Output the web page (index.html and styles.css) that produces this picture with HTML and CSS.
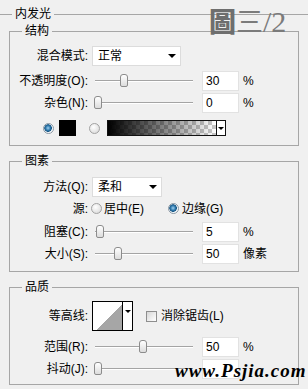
FILE: index.html
```html
<!DOCTYPE html>
<html lang="zh-CN">
<head>
  <meta charset="UTF-8">
  <meta name="viewport" content="width=device-width, initial-scale=1.0">
  <title>内发光</title>
  <link rel="stylesheet" href="styles.css">
</head>
<body>
  <fieldset class="panel">
    <legend>内发光</legend>

    <!-- 结构 -->
    <fieldset class="group group-structure">
      <legend>结构</legend>
      <div class="row">
        <span class="label">混合模式:</span>
        <div class="select select-mode"><span>正常</span><i class="arrow"></i></div>
      </div>
      <div class="row row-opacity">
        <span class="label">不透明度(O):</span>
        <div class="slider"><span class="thumb" style="left: 25px"></span></div>
        <div class="num">30</div>
        <span class="unit">%</span>
      </div>
      <div class="row">
        <span class="label">杂色(N):</span>
        <div class="slider"><span class="thumb" style="left: -1px"></span></div>
        <div class="num">0</div>
        <span class="unit">%</span>
      </div>
      <div class="row row-colors">
        <span class="radio on"></span>
        <span class="swatch"></span>
        <span class="radio radio-gradient"></span>
        <div class="gradient"><span class="gradient-fill"></span><span class="gradient-drop"><i class="arrow"></i></span></div>
      </div>
    </fieldset>

    <!-- 图素 -->
    <fieldset class="group group-elements">
      <legend>图素</legend>
      <div class="row">
        <span class="label">方法(Q):</span>
        <div class="select select-method"><span>柔和</span><i class="arrow"></i></div>
      </div>
      <div class="row row-source">
        <span class="label">源:</span>
        <span class="radio"></span>
        <span class="choice">居中(E)</span>
        <span class="radio on radio-edge"></span>
        <span class="choice">边缘(G)</span>
      </div>
      <div class="row row-choke">
        <span class="label">阻塞(C):</span>
        <div class="slider"><span class="thumb" style="left: 1px"></span></div>
        <div class="num">5</div>
        <span class="unit">%</span>
      </div>
      <div class="row">
        <span class="label">大小(S):</span>
        <div class="slider"><span class="thumb" style="left: 19px"></span></div>
        <div class="num">50</div>
        <span class="unit">像素</span>
      </div>
    </fieldset>

    <!-- 品质 -->
    <fieldset class="group group-quality">
      <legend>品质</legend>
      <div class="row row-contour">
        <span class="label">等高线:</span>
        <div class="contour"><span class="contour-curve"></span><span class="contour-drop"><i class="arrow"></i></span></div>
        <span class="checkbox"></span>
        <span class="choice">消除锯齿(L)</span>
      </div>
      <div class="row row-range">
        <span class="label">范围(R):</span>
        <div class="slider"><span class="thumb" style="left: 44px"></span></div>
        <div class="num">50</div>
        <span class="unit">%</span>
      </div>
      <div class="row">
        <span class="label">抖动(J):</span>
        <div class="slider"><span class="thumb" style="left: -1px"></span></div>
        <div class="num"></div>
      </div>
    </fieldset>
  </fieldset>

  <div class="mark-title"><b>圖</b>三<span class="mark-num">/2</span></div>
  <div class="mark-site">www.Psjia.com</div>
</body>
</html>
```

FILE: styles.css
```css
body {
  margin: 0;
  background-color: #f0f0f0;
  font-family: "Liberation Sans", "Noto Sans CJK SC", sans-serif;
  font-size: 12px;
  line-height: 16px;
  color: #000;
  position: relative;
  height: 389px;
  overflow: hidden;
}

/* group boxes */
.panel {
  margin: 6px 0 0;
  padding: 1px 0 0;
  border: none;
  border-top: 1px solid #a6a6a6;
  min-width: 0;
}

.panel > legend {
  margin-left: 12px;
  padding: 0 3px;
}

.group {
  margin: 0 0 0 9px;
  width: 290px;
  box-sizing: border-box;
  border: 1px solid #a6a6a6;
  padding: 6px 0 6px;
  min-width: 0;
}

.group > legend {
  margin-left: 12px;
  padding: 0 3px;
}

.group-elements {
  margin-top: 7px;
  padding-top: 7px;
}

.group-quality {
  margin-top: 7px;
  padding-bottom: 4px;
}

/* rows */
.row {
  display: flex;
  align-items: center;
  height: 22px;
}

.row-opacity { margin-top: 3px; }
.row-colors { margin-top: 3px; }
.row-source { height: 21px; }
.row-choke { margin-top: 2px; }
.row-contour { height: 30px; }
.row-range { margin-top: 5px; }

.label {
  flex: none;
  width: 78px;
  text-align: right;
}

/* dropdowns */
.select {
  margin-left: 4px;
  height: 20px;
  box-sizing: border-box;
  background: #fff;
  border: 1px solid #dcdcdc;
  display: flex;
  align-items: center;
  justify-content: space-between;
  padding: 0 4px 0 5px;
}

.select-mode { width: 89px; }
.select-method { width: 70px; }

.arrow {
  display: block;
  width: 0;
  height: 0;
  border-left: 4px solid transparent;
  border-right: 4px solid transparent;
  border-top: 4px solid #000;
}

/* sliders */
.slider {
  position: relative;
  flex: none;
  margin-left: 7px;
  width: 98px;
  height: 1px;
  background: #a4a4a4;
  border-bottom: 1px solid #fff;
}

.thumb {
  position: absolute;
  top: -6px;
  width: 8px;
  height: 13px;
  box-sizing: border-box;
  border: 1px solid #8c8c8c;
  border-radius: 3px 3px 2px 2px;
  background: linear-gradient(#ffffff, #dcdcdc);
}

.num {
  flex: none;
  margin-left: 9px;
  width: 37px;
  height: 20px;
  box-sizing: border-box;
  background: #fff;
  border: 1px solid #e2e2e2;
  padding-left: 3px;
  line-height: 18px;
}

.unit {
  margin-left: 4px;
}

/* radios and swatches */
.radio {
  flex: none;
  width: 11px;
  height: 11px;
  box-sizing: border-box;
  border-radius: 50%;
  border: 1px solid #a2a2a2;
  background: radial-gradient(circle at 40% 35%, #ffffff, #d4d4d4);
}

.radio.on {
  border-color: #8a98a4;
  background: radial-gradient(circle at 45% 45%, #9fd2f2 0, #2a74a8 2.5px, #1d5a86 3.5px, #dfe9f1 4px, #ffffff 5px);
}

.row-colors .radio.on { margin-left: 33px; }

.swatch {
  flex: none;
  margin-left: 5px;
  width: 17px;
  height: 16px;
  background: #000;
}

.radio-gradient { margin-left: 13px; }

.gradient {
  flex: none;
  display: flex;
  margin-left: 7px;
  width: 119px;
  height: 16px;
  box-sizing: border-box;
  border: 1px solid #111;
}

.gradient-fill {
  flex: 1;
  background:
    linear-gradient(to right, #000, rgba(0, 0, 0, 0)),
    repeating-conic-gradient(#c8c8c8 0 25%, #ffffff 0 50%) 0 0 / 8px 8px;
}

.gradient-drop {
  flex: none;
  width: 8px;
  border-left: 1px solid #111;
  background: #fff;
  display: flex;
  align-items: center;
  justify-content: center;
}

.gradient-drop .arrow {
  border-left-width: 3px;
  border-right-width: 3px;
  border-top-width: 3px;
}

.row-source .radio { margin-left: 3px; }
.row-source .radio-edge { margin-left: 24px; }

.choice {
  margin-left: 2px;
}

.row-source .radio-edge + .choice { margin-left: 3px; }

/* contour */
.contour {
  flex: none;
  display: flex;
  margin-left: 4px;
  width: 41px;
  height: 30px;
  box-sizing: border-box;
  border: 1px solid #000;
  background: #fff;
}

.contour-curve {
  flex: 1;
  margin: 2px 0 0 3px;
  background: linear-gradient(to bottom right, #ffffff 50%, #a6a6a6 50%);
}

.contour-drop {
  flex: none;
  width: 10px;
  border-left: 1px solid #000;
  padding-top: 8px;
  box-sizing: border-box;
  display: flex;
  justify-content: center;
}

.contour-drop .arrow {
  border-left-width: 3px;
  border-right-width: 3px;
  border-top-width: 3px;
}

.checkbox {
  flex: none;
  margin-left: 13px;
  width: 11px;
  height: 11px;
  box-sizing: border-box;
  border: 1px solid #8e8e8e;
  background: linear-gradient(135deg, #d6d6d6, #ffffff);
}

.checkbox + .choice { margin-left: 4px; }

/* watermarks */
.mark-title {
  position: absolute;
  left: 209px;
  top: 5px;
  font-family: "Noto Sans CJK TC", "Noto Sans CJK SC", sans-serif;
  font-size: 27px;
  line-height: 32px;
  color: #7b7b7b;
}

.mark-title b {
  font-weight: 900;
  color: #6e6e6e;
}

.mark-num {
  font-family: "Liberation Serif", serif;
  font-size: 30px;
}

.mark-site {
  position: absolute;
  left: 175px;
  top: 361px;
  font-family: "Liberation Serif", serif;
  font-style: italic;
  font-weight: bold;
  font-size: 19px;
  line-height: 20px;
  letter-spacing: 1px;
  color: #000;
}
```
